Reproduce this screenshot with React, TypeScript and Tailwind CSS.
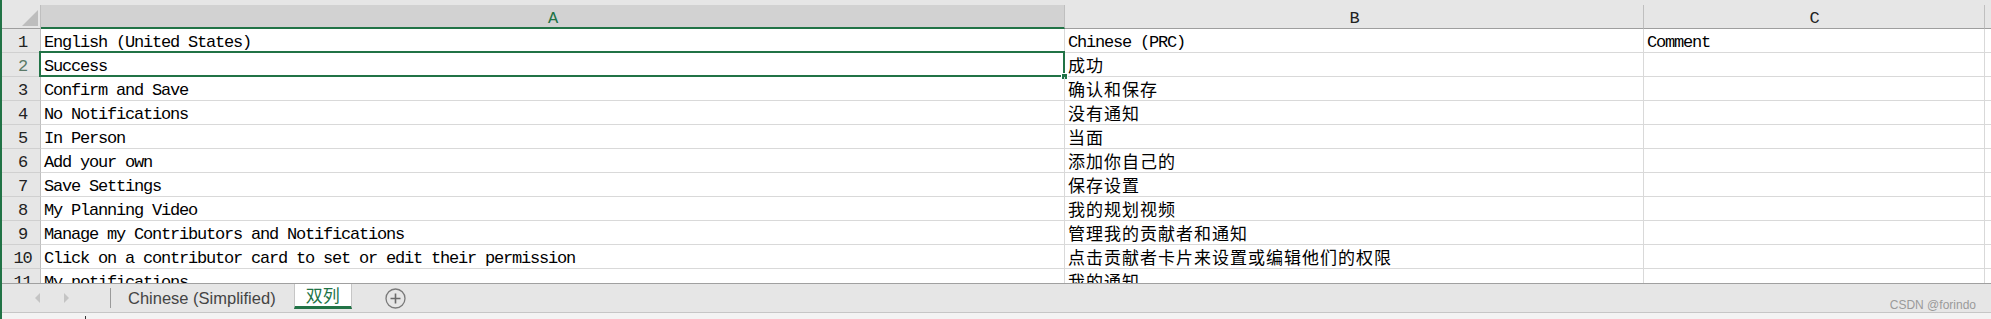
import React from "react";

const ROWS: [string, string, string][] = [
  ["English (United States)", "Chinese (PRC)", "Comment"],
  ["Success", "成功", ""],
  ["Confirm and Save", "确认和保存", ""],
  ["No Notifications", "没有通知", ""],
  ["In Person", "当面", ""],
  ["Add your own", "添加你自己的", ""],
  ["Save Settings", "保存设置", ""],
  ["My Planning Video", "我的规划视频", ""],
  ["Manage my Contributors and Notifications", "管理我的贡献者和通知", ""],
  ["Click on a contributor card to set or edit their permission", "点击贡献者卡片来设置或编辑他们的权限", ""],
  ["My notifications", "我的通知", ""],
  ["", "", ""],
];

// Latin text: narrow mono, CJK text: 18px advance
const latin = "font-['Liberation_Mono',monospace] text-[17px] tracking-[-1.2px] leading-[19px] pt-[4px]";
const cjk = "font-['Noto_Sans_CJK_SC',sans-serif] text-[17px] tracking-[1px] leading-[19px] pt-[2px]";

const hasCjk = (s: string) => /[\u4e00-\u9fff]/.test(s);

function Row({ n, cells }: { n: number; cells: [string, string, string] }) {
  const selected = n === 2;
  return (
    <div className="flex h-[24px] shrink-0">
      <div
        className={`w-[39px] shrink-0 border-r border-b border-r-[#bfbfbf] border-b-[#d0d0d0] bg-[#e6e6e6] text-center pl-[3px] whitespace-nowrap ${latin} ${
          selected ? "text-[#5b7a68]" : "text-[#222]"
        }`}
      >
        {n}
      </div>
      <div className={`relative w-[1024px] shrink-0 border-r border-b border-[#d9d9d9] pl-[3px] whitespace-nowrap text-black ${latin}`}>
        {cells[0]}
        {selected && (
          <div className="absolute top-[-2px] left-[-2px] right-[-1px] bottom-[-1px] border-2 border-[#217346]">
            <div className="absolute right-[-5px] bottom-[-5px] w-[7px] h-[7px] bg-[#217346] border border-white" />
          </div>
        )}
      </div>
      <div
        className={`w-[579px] shrink-0 border-r border-b border-[#d9d9d9] pl-[3px] whitespace-nowrap text-black ${
          hasCjk(cells[1]) ? cjk : latin
        }`}
      >
        {cells[1]}
      </div>
      <div className={`w-[341px] shrink-0 border-r border-b border-[#d9d9d9] pl-[3px] whitespace-nowrap text-black ${latin}`}>
        {cells[2]}
      </div>
      <div className="flex-1 border-b border-[#d9d9d9]" />
    </div>
  );
}

function Grid() {
  return (
    <div className="h-[283px] flex flex-col overflow-hidden bg-white">
      <div className="h-[5px] shrink-0 bg-[#e6e6e6]" />
      {/* column headers */}
      <div className="flex h-[24px] shrink-0 bg-[#e6e6e6]">
        <div className="w-[39px] shrink-0 border-r border-b border-r-[#bfbfbf] border-b-[#9e9e9e] flex items-start pt-[5px] pl-[20px]">
          <svg width="16" height="16" viewBox="0 0 16 16">
            <polygon points="16,0 16,16 0,16" fill="#bdbdbd" />
          </svg>
        </div>
        <div className={`w-[1024px] shrink-0 bg-[#d2d2d2] border-r border-r-[#bfbfbf] border-b-2 border-b-[#217346] text-center text-[#217346] ${latin}`}>
          A
        </div>
        <div className={`w-[579px] shrink-0 border-r border-r-[#bfbfbf] border-b border-b-[#9e9e9e] text-center text-[#222] ${latin}`}>
          B
        </div>
        <div className={`w-[341px] shrink-0 border-r border-r-[#bfbfbf] border-b border-b-[#9e9e9e] text-center text-[#222] ${latin}`}>
          C
        </div>
        <div className="flex-1 border-b border-b-[#9e9e9e]" />
      </div>
      {ROWS.map((r, i) => (
        <Row key={i} n={i + 1} cells={r} />
      ))}
    </div>
  );
}

function SheetTabs() {
  return (
    <div className="h-[29px] shrink-0 border-t border-[#a0a0a0] bg-[#e6e6e6] flex items-stretch">
      {/* scroll arrows */}
      <div className="w-[108px] shrink-0 flex items-center pl-[33px] gap-[24px]">
        <svg width="5" height="10" viewBox="0 0 5 10">
          <polygon points="5,0 5,10 0,5" fill="#c4c4c4" />
        </svg>
        <svg width="5" height="10" viewBox="0 0 5 10">
          <polygon points="0,0 0,10 5,5" fill="#c4c4c4" />
        </svg>
      </div>
      <div className="w-px bg-[#9a9a9a] my-[4px] shrink-0" />
      <div className="pl-[17px] pr-[18px] flex items-center font-['Liberation_Sans',sans-serif] text-[16.5px] text-[#444] whitespace-nowrap">
        Chinese (Simplified)
      </div>
      <div className="w-[58px] h-[25px] shrink-0 bg-white border-l border-r border-[#c6c6c6] border-b-[3px] border-b-[#217346] flex items-center justify-center font-['Noto_Sans_CJK_SC',sans-serif] text-[17px] text-[#217346]">
        双列
      </div>
      <div className="ml-[33px] flex items-center">
        <svg width="21" height="21" viewBox="0 0 21 21">
          <circle cx="10.5" cy="10.5" r="9.5" fill="none" stroke="#7a7a7a" strokeWidth="1.3" />
          <path d="M10.5 5.5v10M5.5 10.5h10" stroke="#6a6a6a" strokeWidth="1.6" />
        </svg>
      </div>
      <div className="ml-auto self-end pr-[15px] font-['Liberation_Sans',sans-serif] text-[12px] leading-[14px] text-[#9a9a9a] whitespace-nowrap">
        CSDN @forindo
      </div>
    </div>
  );
}

export default function App() {
  return (
    <div className="w-[1991px] h-[319px] flex flex-col overflow-hidden border-l-2 border-[#217346] bg-white">
      <Grid />
      <SheetTabs />
      <div className="h-[7px] shrink-0 border-t border-[#c6c6c6] bg-[#f3f3f3] relative">
        <div className="absolute left-[83px] top-[3px] w-px h-[3px] bg-[#333]" />
      </div>
    </div>
  );
}
